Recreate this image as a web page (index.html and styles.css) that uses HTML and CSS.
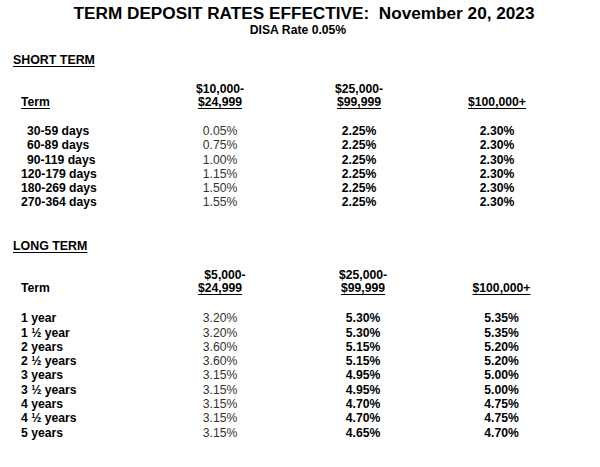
FILE: index.html
```html
<!DOCTYPE html>
<html lang="en">
<head>
<meta charset="utf-8">
<title>Term Deposit Rates</title>
<link rel="stylesheet" href="styles.css">
</head>
<body>
<main class="page">
  <h1 class="title">TERM DEPOSIT RATES EFFECTIVE:&nbsp; November 20, 2023</h1>
  <p class="subtitle">DISA Rate 0.05%</p>

  <section class="block block-short">
    <h2 class="section-title">SHORT TERM</h2>
    <div class="rate-table table-short">
      <div class="row head">
        <div class="cell term"><span class="ul">Term</span></div>
        <div class="cell amt"><span>$10,000-</span><span class="ul">$24,999</span></div>
        <div class="cell amt"><span>$25,000-</span><span class="ul">$99,999</span></div>
        <div class="cell amt"><span class="ul">$100,000+</span></div>
      </div>
      <div class="rows">
        <div class="row data"><div class="cell term ind">30-59 days</div><div class="cell val">0.05%</div><div class="cell val b">2.25%</div><div class="cell val b">2.30%</div></div>
        <div class="row data"><div class="cell term ind">60-89 days</div><div class="cell val">0.75%</div><div class="cell val b">2.25%</div><div class="cell val b">2.30%</div></div>
        <div class="row data"><div class="cell term ind">90-119 days</div><div class="cell val">1.00%</div><div class="cell val b">2.25%</div><div class="cell val b">2.30%</div></div>
        <div class="row data"><div class="cell term">120-179 days</div><div class="cell val">1.15%</div><div class="cell val b">2.25%</div><div class="cell val b">2.30%</div></div>
        <div class="row data"><div class="cell term">180-269 days</div><div class="cell val">1.50%</div><div class="cell val b">2.25%</div><div class="cell val b">2.30%</div></div>
        <div class="row data"><div class="cell term">270-364 days</div><div class="cell val">1.55%</div><div class="cell val b">2.25%</div><div class="cell val b">2.30%</div></div>
      </div>
    </div>
  </section>

  <section class="block block-long">
    <h2 class="section-title">LONG TERM</h2>
    <div class="rate-table table-long">
      <div class="row head">
        <div class="cell term">Term</div>
        <div class="cell amt"><span class="nudge">$5,000-</span><span class="ul">$24,999</span></div>
        <div class="cell amt"><span>$25,000-</span><span class="ul">$99,999</span></div>
        <div class="cell amt"><span class="ul">$100,000+</span></div>
      </div>
      <div class="rows">
        <div class="row data"><div class="cell term">1 year</div><div class="cell val">3.20%</div><div class="cell val b">5.30%</div><div class="cell val b">5.35%</div></div>
        <div class="row data"><div class="cell term">1 ½ year</div><div class="cell val">3.20%</div><div class="cell val b">5.30%</div><div class="cell val b">5.35%</div></div>
        <div class="row data"><div class="cell term">2 years</div><div class="cell val">3.60%</div><div class="cell val b">5.15%</div><div class="cell val b">5.20%</div></div>
        <div class="row data"><div class="cell term">2 ½ years</div><div class="cell val">3.60%</div><div class="cell val b">5.15%</div><div class="cell val b">5.20%</div></div>
        <div class="row data"><div class="cell term">3 years</div><div class="cell val">3.15%</div><div class="cell val b">4.95%</div><div class="cell val b">5.00%</div></div>
        <div class="row data"><div class="cell term">3 ½ years</div><div class="cell val">3.15%</div><div class="cell val b">4.95%</div><div class="cell val b">5.00%</div></div>
        <div class="row data"><div class="cell term">4 years</div><div class="cell val">3.15%</div><div class="cell val b">4.70%</div><div class="cell val b">4.75%</div></div>
        <div class="row data"><div class="cell term">4 ½ years</div><div class="cell val">3.15%</div><div class="cell val b">4.70%</div><div class="cell val b">4.75%</div></div>
        <div class="row data"><div class="cell term">5 years</div><div class="cell val">3.15%</div><div class="cell val b">4.65%</div><div class="cell val b">4.70%</div></div>
      </div>
    </div>
  </section>
</main>
</body>
</html>
```

FILE: styles.css
```css
html, body {
  margin: 0;
  padding: 0;
  background: #ffffff;
}

.page {
  width: 600px;
  height: 467px;
  box-sizing: border-box;
  padding-top: 3px;
  font-family: "Liberation Sans", Arial, sans-serif;
  font-size: 12.2px;
  font-weight: bold;
  color: #000;
  overflow: hidden;
}

.title {
  margin: 0;
  padding-left: 8px;
  font-size: 17.2px;
  line-height: 20px;
  font-weight: bold;
  text-align: center;
  white-space: nowrap;
}

.subtitle {
  margin: 0;
  padding-right: 4px;
  font-size: 12.2px;
  line-height: 14px;
  text-align: center;
}

.block {
  padding-left: 13px;
}

.block-short {
  margin-top: 15.5px;
}

.block-long {
  margin-top: 30px;
}

.section-title {
  margin: 0;
  font-size: 12.4px;
  line-height: 14px;
  font-weight: bold;
  text-decoration: underline;
  text-decoration-thickness: 1px;
  text-underline-offset: 1.5px;
}

.rate-table {
  margin-left: 8px;
}

.table-short {
  --cols: 129px 140px 138px 138px;
}

.table-long {
  --cols: 129px 140px 146px 131px;
}

.row {
  display: grid;
  grid-template-columns: var(--cols);
}

.head {
  line-height: 13px;
  align-items: end;
}

.table-short .head {
  margin-top: 16.8px;
}

.table-long .head {
  margin-top: 15.8px;
}

.table-short .rows {
  margin-top: 14.8px;
}

.table-long .rows {
  margin-top: 16.1px;
}

.table-short .data {
  line-height: 14.2px;
}

.table-long .data {
  line-height: 14.3px;
}

.cell {
  white-space: nowrap;
}

.amt {
  display: flex;
  flex-direction: column;
  align-items: center;
}

.nudge {
  padding-left: 10px;
}

.ul {
  text-decoration: underline;
  text-decoration-thickness: 1px;
  text-underline-offset: 1.5px;
}

.ind {
  padding-left: 6px;
}

.val {
  text-align: center;
  font-weight: normal;
  color: #333;
}

.val.b {
  font-weight: bold;
  color: #000;
}
```
